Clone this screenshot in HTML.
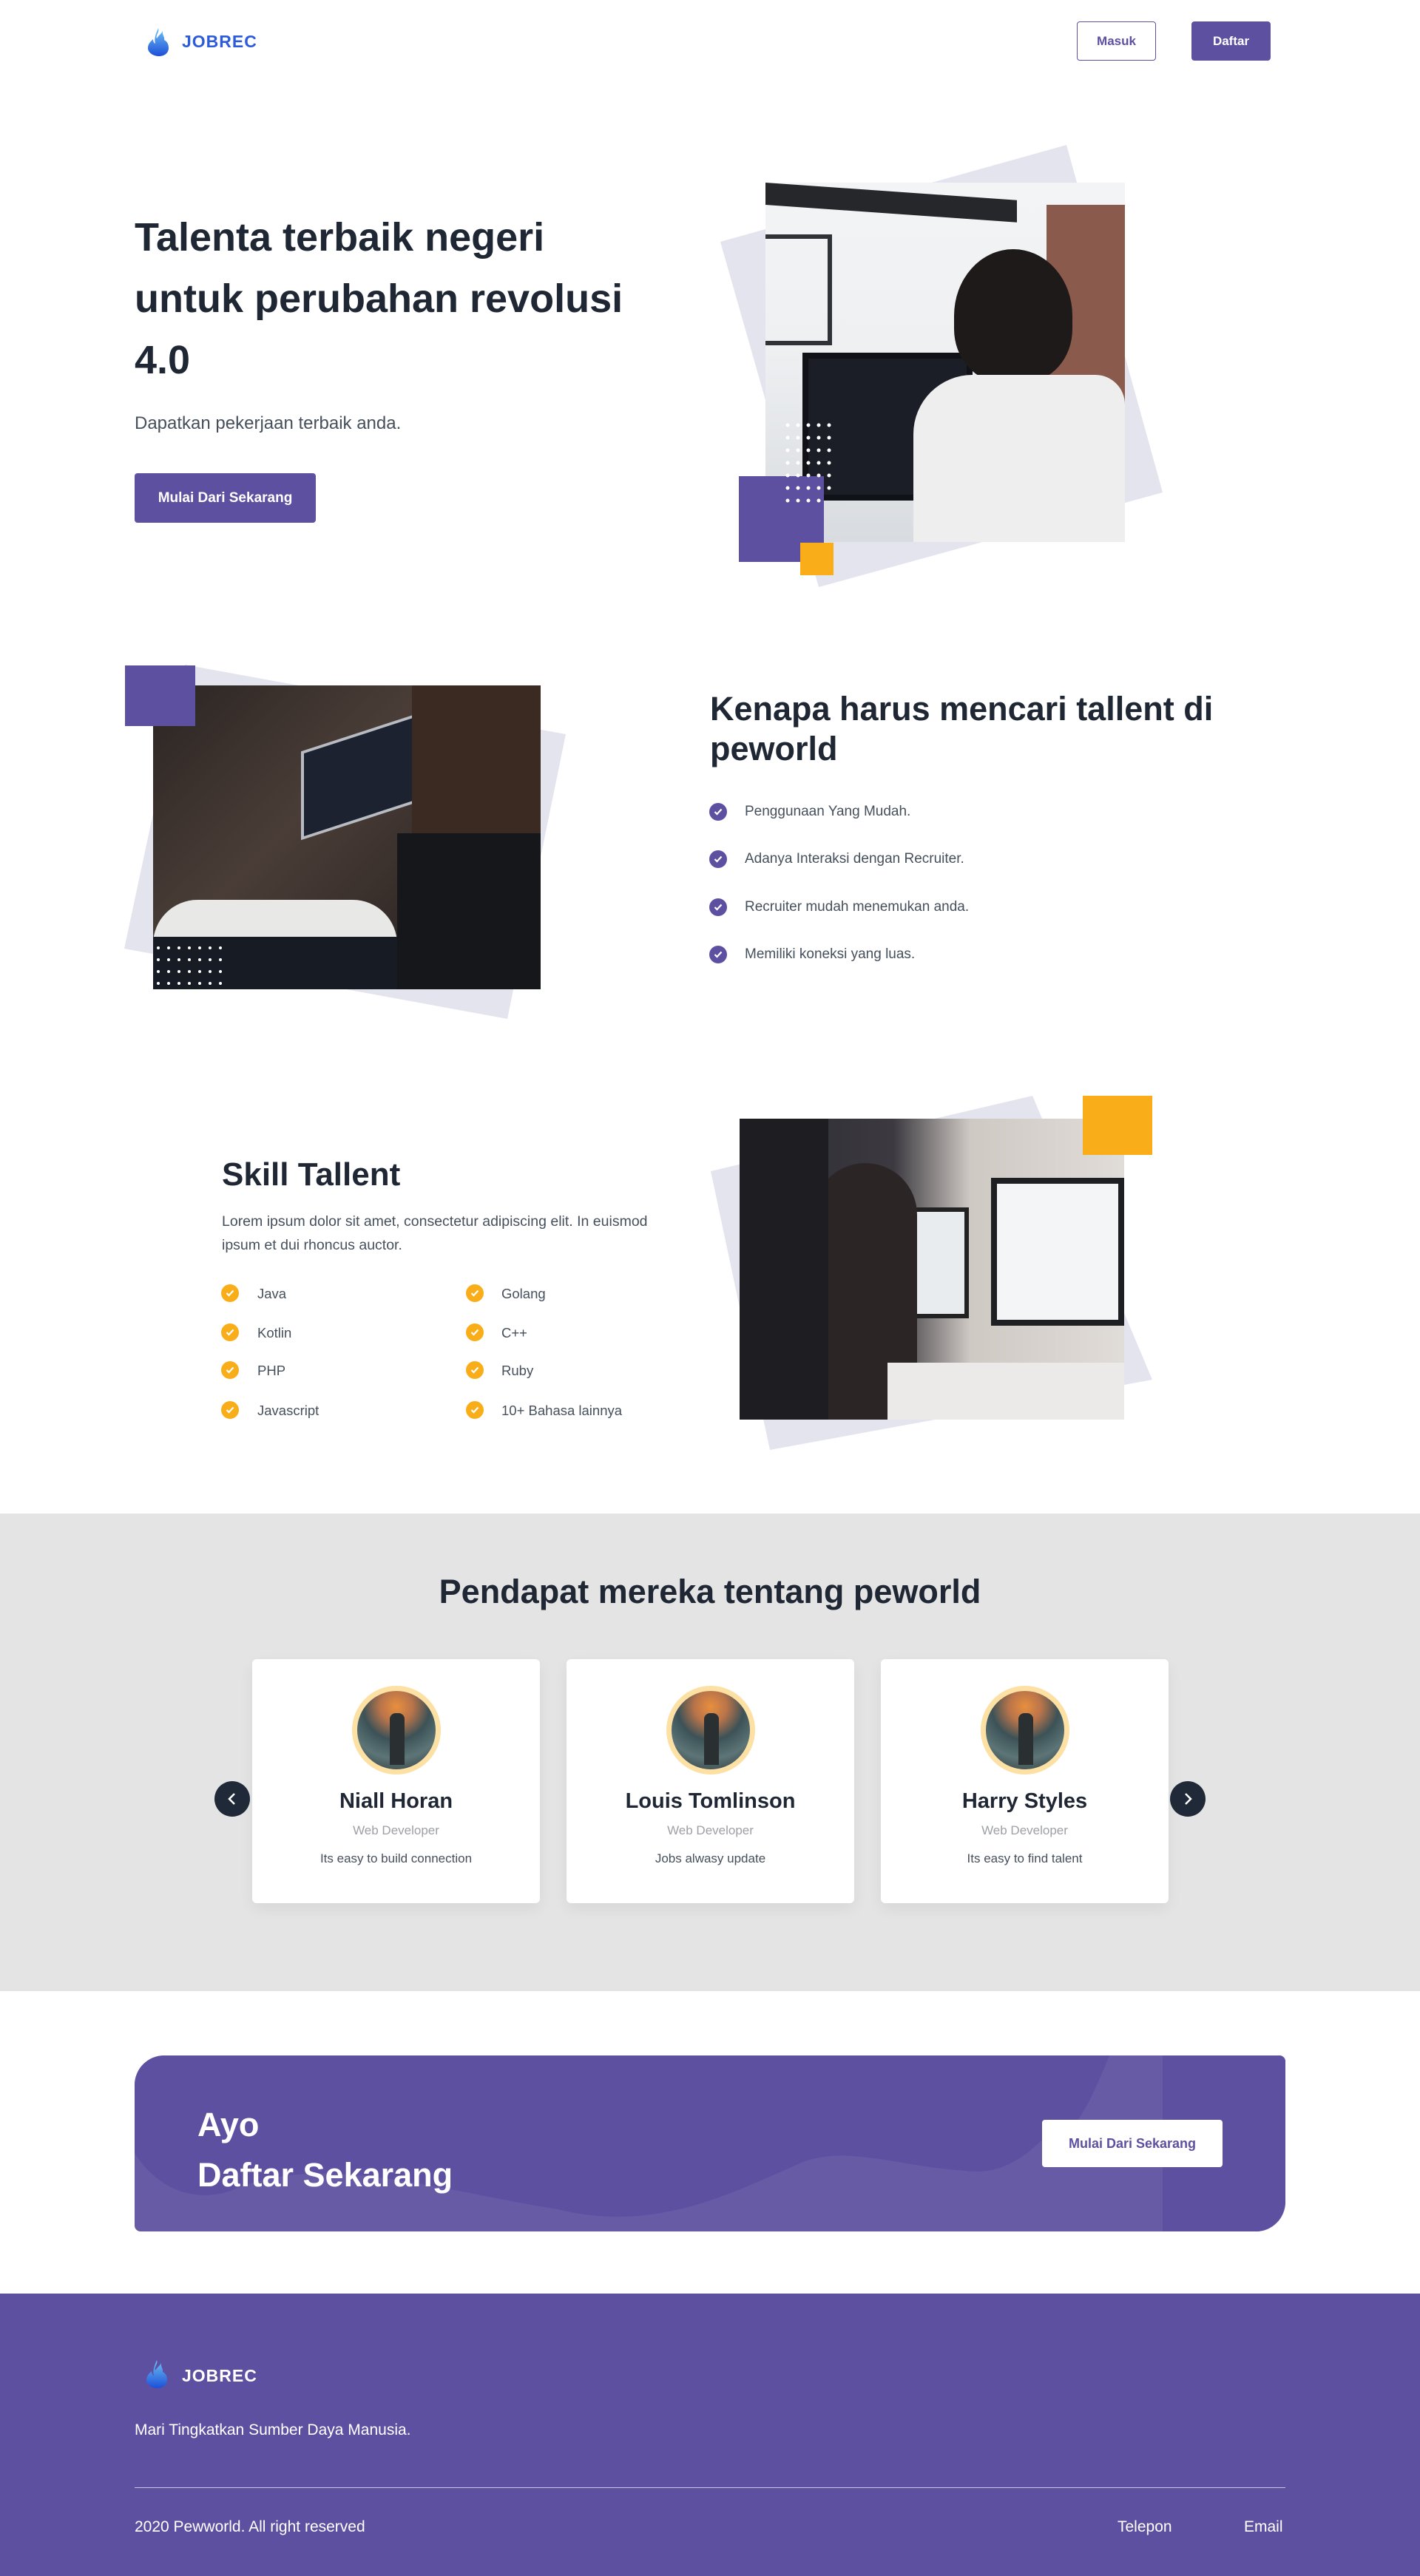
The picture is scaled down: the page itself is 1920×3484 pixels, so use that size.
<!DOCTYPE html>
<html><head><meta charset="utf-8"><style>
*{margin:0;padding:0;box-sizing:border-box}
body{width:1920px;height:3484px;position:relative;background:#fff;font-family:"Liberation Sans",Arial,sans-serif;color:#1f2734;overflow:hidden}
.a{position:absolute}
.btn{position:absolute;display:flex;align-items:center;justify-content:center;font-weight:bold;border-radius:4px}
.chk{position:absolute;width:24px;height:24px;border-radius:50%;display:flex;align-items:center;justify-content:center}
.li{position:absolute;font-size:19px;color:#46505c;white-space:nowrap}
.sk{font-size:18.5px}
.card{position:absolute;top:2244px;width:389px;height:330px;background:#fff;border-radius:6px;box-shadow:0 8px 20px rgba(0,0,0,.06);text-align:center}
.av{position:absolute;left:135px;top:36px;width:120px;height:120px;border-radius:50%;border:7px solid #fde0a4;background:radial-gradient(circle at 50% 20%,#e88f3e 0,#b9744a 22%,#3c5257 45%,#5d7577 70%,#2d3638 100%);overflow:hidden}
.av:after{content:"";position:absolute;left:44px;top:30px;width:20px;height:70px;background:#2a3032;border-radius:8px 8px 0 0}
.nm{position:absolute;left:0;right:0;top:176px;font-size:29px;font-weight:bold;color:#1f2734}
.rl{position:absolute;left:0;right:0;top:222px;font-size:17px;color:#9ea0a5}
.tx{position:absolute;left:0;right:0;top:260px;font-size:17px;color:#46505c}
.arr{position:absolute;top:2409px;width:48px;height:48px;border-radius:50%;background:#1f2937;display:flex;align-items:center;justify-content:center}
</style></head><body>

<!-- NAV -->
<svg class="a" style="left:196px;top:36px" width="36" height="42" viewBox="0 0 36 42">
<defs><linearGradient id="fl" x1="0" y1="0" x2="0" y2="1"><stop offset="0" stop-color="#6ec3f5"/><stop offset="1" stop-color="#1d4fd8"/></linearGradient></defs>
<path d="M18 2c2 6-4 9-2 14c2-4 6-6 8-10c-1 5 3 8 2 12c4 2 6 6 6 11c0 6-5 11-13 11S4 35 4 29c0-6 4-9 7-12c0 3 1 5 3 6c-2-7 1-14 4-21z" fill="url(#fl)"/>
</svg>
<div class="a" style="left:246px;top:43px;font-size:23px;font-weight:bold;color:#2c5bdc;letter-spacing:1px">JOBREC</div>
<div class="btn" style="left:1456px;top:29px;width:107px;height:53px;border:1px solid #5e50a1;color:#5e50a1;font-size:17px">Masuk</div>
<div class="btn" style="left:1611px;top:29px;width:107px;height:53px;background:#5e50a1;color:#fff;font-size:17px">Daftar</div>

<!-- HERO -->
<div class="a" style="left:182px;top:280px;font-size:54px;font-weight:bold;line-height:83px;color:#1f2734">Talenta terbaik negeri<br>untuk perubahan revolusi<br>4.0</div>
<div class="a" style="left:182px;top:559px;font-size:24px;color:#46505c">Dapatkan pekerjaan terbaik anda.</div>
<div class="btn" style="left:182px;top:640px;width:245px;height:67px;background:#5e50a1;color:#fff;font-size:19px">Mulai Dari Sekarang</div>

<svg class="a" style="left:0;top:0" width="1920" height="2050">
<polygon points="974,327 1442,196 1572,666 1107,794" fill="#e3e4ee"/>
<polygon points="250,899 765,993 686,1378 168,1283" fill="#e3e4ee"/>
<polygon points="1396,1482 1558,1866 1041,1961 961,1584" fill="#e3e4ee"/>
</svg>

<div class="a" style="left:1035px;top:247px;width:486px;height:486px;overflow:hidden;background:linear-gradient(180deg,#f2f4f6 0,#eef0f2 45%,#d8dbdf 100%)">
  <div class="a" style="left:0;top:0;width:340px;height:30px;background:#25272b;transform:skewY(4deg);transform-origin:0 0"></div>
  <div class="a" style="left:380px;top:30px;width:106px;height:300px;background:#8a5a4c"></div>
  <div class="a" style="left:0;top:70px;width:90px;height:150px;border:6px solid #2f3236;border-left:none"></div>
  <div class="a" style="left:50px;top:230px;width:230px;height:200px;background:#1b1e27;border:8px solid #101217"></div>
  <div class="a" style="left:255px;top:90px;width:160px;height:180px;background:#1e1a19;border-radius:50% 50% 40% 40%"></div>
  <div class="a" style="left:200px;top:260px;width:286px;height:226px;background:#eeeeee;border-radius:80px 40px 0 0"></div>
</div>
<div class="a" style="left:999px;top:644px;width:115px;height:116px;background:#5e50a1"></div>
<div class="a" style="left:1082px;top:734px;width:45px;height:44px;background:#f9ae19"></div>
<svg class="a" style="left:1060px;top:570px" width="120" height="150"><g fill="#fff">
<circle cx="5" cy="5" r="2.5"/><circle cx="19" cy="5" r="2.5"/><circle cx="33" cy="5" r="2.5"/><circle cx="47" cy="5" r="2.5"/><circle cx="61" cy="5" r="2.5"/>
<circle cx="5" cy="22" r="2.5"/><circle cx="19" cy="22" r="2.5"/><circle cx="33" cy="22" r="2.5"/><circle cx="47" cy="22" r="2.5"/><circle cx="61" cy="22" r="2.5"/>
<circle cx="5" cy="39" r="2.5"/><circle cx="19" cy="39" r="2.5"/><circle cx="33" cy="39" r="2.5"/><circle cx="47" cy="39" r="2.5"/><circle cx="61" cy="39" r="2.5"/>
<circle cx="5" cy="56" r="2.5"/><circle cx="19" cy="56" r="2.5"/><circle cx="33" cy="56" r="2.5"/><circle cx="47" cy="56" r="2.5"/><circle cx="61" cy="56" r="2.5"/>
<circle cx="5" cy="73" r="2.5"/><circle cx="19" cy="73" r="2.5"/><circle cx="33" cy="73" r="2.5"/><circle cx="47" cy="73" r="2.5"/><circle cx="61" cy="73" r="2.5"/>
<circle cx="5" cy="90" r="2.5"/><circle cx="19" cy="90" r="2.5"/><circle cx="33" cy="90" r="2.5"/><circle cx="47" cy="90" r="2.5"/><circle cx="61" cy="90" r="2.5"/>
<circle cx="5" cy="107" r="2.5"/><circle cx="19" cy="107" r="2.5"/><circle cx="33" cy="107" r="2.5"/><circle cx="47" cy="107" r="2.5"/>
</g></svg>

<!-- SECTION 2 -->
<div class="a" style="left:207px;top:927px;width:524px;height:411px;overflow:hidden;background:linear-gradient(135deg,#2b2523 0,#4a3d37 40%,#1e1a1a 100%)">
  <div class="a" style="left:200px;top:60px;width:180px;height:120px;background:#1c2230;border:4px solid #b8bcc2;transform:skewY(-18deg)"></div>
  <div class="a" style="left:0;top:290px;width:330px;height:121px;background:#e8e8e6;border-radius:60px 60px 0 0"></div>
  <div class="a" style="left:0;top:340px;width:330px;height:71px;background:#171b24"></div>
  <div class="a" style="left:350px;top:0;width:174px;height:411px;background:#3a2a22"></div>
  <div class="a" style="left:330px;top:200px;width:194px;height:211px;background:#15171a"></div>
</div>
<div class="a" style="left:169px;top:900px;width:95px;height:82px;background:#5e50a1"></div>
<svg class="a" style="left:210px;top:1278px" width="110" height="60"><g fill="#fff">
<circle cx="4" cy="4" r="2"/><circle cx="18" cy="4" r="2"/><circle cx="32" cy="4" r="2"/><circle cx="46" cy="4" r="2"/><circle cx="60" cy="4" r="2"/><circle cx="74" cy="4" r="2"/><circle cx="88" cy="4" r="2"/>
<circle cx="4" cy="20" r="2"/><circle cx="18" cy="20" r="2"/><circle cx="32" cy="20" r="2"/><circle cx="46" cy="20" r="2"/><circle cx="60" cy="20" r="2"/><circle cx="74" cy="20" r="2"/><circle cx="88" cy="20" r="2"/>
<circle cx="4" cy="36" r="2"/><circle cx="18" cy="36" r="2"/><circle cx="32" cy="36" r="2"/><circle cx="46" cy="36" r="2"/><circle cx="60" cy="36" r="2"/><circle cx="74" cy="36" r="2"/><circle cx="88" cy="36" r="2"/>
<circle cx="4" cy="52" r="2"/><circle cx="18" cy="52" r="2"/><circle cx="32" cy="52" r="2"/><circle cx="46" cy="52" r="2"/><circle cx="60" cy="52" r="2"/><circle cx="74" cy="52" r="2"/><circle cx="88" cy="52" r="2"/>
</g></svg>

<div class="a" style="left:960px;top:932px;font-size:45px;font-weight:bold;line-height:54px;color:#1f2734">Kenapa harus mencari tallent di<br>peworld</div>
<div class="chk" style="left:959px;top:1086px;background:#5e50a1"><svg width="12" height="10"><path d="M1.5 5l3 3 6-6.5" stroke="#fff" stroke-width="2.2" fill="none"/></svg></div>
<div class="li" style="left:1007px;top:1087px">Penggunaan Yang Mudah.</div>
<div class="chk" style="left:959px;top:1150px;background:#5e50a1"><svg width="12" height="10"><path d="M1.5 5l3 3 6-6.5" stroke="#fff" stroke-width="2.2" fill="none"/></svg></div>
<div class="li" style="left:1007px;top:1151px">Adanya Interaksi dengan Recruiter.</div>
<div class="chk" style="left:959px;top:1215px;background:#5e50a1"><svg width="12" height="10"><path d="M1.5 5l3 3 6-6.5" stroke="#fff" stroke-width="2.2" fill="none"/></svg></div>
<div class="li" style="left:1007px;top:1216px">Recruiter mudah menemukan anda.</div>
<div class="chk" style="left:959px;top:1279px;background:#5e50a1"><svg width="12" height="10"><path d="M1.5 5l3 3 6-6.5" stroke="#fff" stroke-width="2.2" fill="none"/></svg></div>
<div class="li" style="left:1007px;top:1280px">Memiliki koneksi yang luas.</div>

<!-- SECTION 3 -->
<div class="a" style="left:300px;top:1564px;font-size:44px;font-weight:bold;color:#1f2734">Skill Tallent</div>
<div class="a" style="left:300px;top:1636px;font-size:19.5px;line-height:32px;color:#46505c">Lorem ipsum dolor sit amet, consectetur adipiscing elit. In euismod<br>ipsum et dui rhoncus auctor.</div>

<div class="chk" style="left:299px;top:1737px;background:#f9ae19"><svg width="12" height="10"><path d="M1.5 5l3 3 6-6.5" stroke="#fff" stroke-width="2.2" fill="none"/></svg></div><div class="li sk" style="left:348px;top:1739px">Java</div>
<div class="chk" style="left:299px;top:1790px;background:#f9ae19"><svg width="12" height="10"><path d="M1.5 5l3 3 6-6.5" stroke="#fff" stroke-width="2.2" fill="none"/></svg></div><div class="li sk" style="left:348px;top:1792px">Kotlin</div>
<div class="chk" style="left:299px;top:1841px;background:#f9ae19"><svg width="12" height="10"><path d="M1.5 5l3 3 6-6.5" stroke="#fff" stroke-width="2.2" fill="none"/></svg></div><div class="li sk" style="left:348px;top:1843px">PHP</div>
<div class="chk" style="left:299px;top:1895px;background:#f9ae19"><svg width="12" height="10"><path d="M1.5 5l3 3 6-6.5" stroke="#fff" stroke-width="2.2" fill="none"/></svg></div><div class="li sk" style="left:348px;top:1897px">Javascript</div>
<div class="chk" style="left:630px;top:1737px;background:#f9ae19"><svg width="12" height="10"><path d="M1.5 5l3 3 6-6.5" stroke="#fff" stroke-width="2.2" fill="none"/></svg></div><div class="li sk" style="left:678px;top:1739px">Golang</div>
<div class="chk" style="left:630px;top:1790px;background:#f9ae19"><svg width="12" height="10"><path d="M1.5 5l3 3 6-6.5" stroke="#fff" stroke-width="2.2" fill="none"/></svg></div><div class="li sk" style="left:678px;top:1792px">C++</div>
<div class="chk" style="left:630px;top:1841px;background:#f9ae19"><svg width="12" height="10"><path d="M1.5 5l3 3 6-6.5" stroke="#fff" stroke-width="2.2" fill="none"/></svg></div><div class="li sk" style="left:678px;top:1843px">Ruby</div>
<div class="chk" style="left:630px;top:1895px;background:#f9ae19"><svg width="12" height="10"><path d="M1.5 5l3 3 6-6.5" stroke="#fff" stroke-width="2.2" fill="none"/></svg></div><div class="li sk" style="left:678px;top:1897px">10+ Bahasa lainnya</div>

<div class="a" style="left:1000px;top:1513px;width:520px;height:407px;overflow:hidden;background:linear-gradient(90deg,#2a2a30 0,#3c3a40 40%,#cfc9c4 60%,#e0dcd8 100%)">
  <div class="a" style="left:220px;top:120px;width:90px;height:150px;background:#e9ecef;border:6px solid #222"></div>
  <div class="a" style="left:340px;top:80px;width:180px;height:200px;background:#f3f5f7;border:8px solid #1d1f22"></div>
  <div class="a" style="left:100px;top:60px;width:140px;height:347px;background:#2b2526;border-radius:70px 70px 0 0"></div>
  <div class="a" style="left:0;top:0;width:120px;height:407px;background:#1e1d22"></div>
  <div class="a" style="left:200px;top:330px;width:320px;height:77px;background:#eceae8"></div>
</div>
<div class="a" style="left:1464px;top:1482px;width:94px;height:80px;background:#f9ae19"></div>

<!-- TESTIMONIALS -->
<div class="a" style="left:0;top:2047px;width:1920px;height:646px;background:#e4e4e4"></div>
<div class="a" style="left:0;right:0;top:2127px;text-align:center;font-size:45px;font-weight:bold;color:#1f2734">Pendapat mereka tentang peworld</div>
<div class="card" style="left:341px"><div class="av"></div><div class="nm">Niall Horan</div><div class="rl">Web Developer</div><div class="tx">Its easy to build connection</div></div>
<div class="card" style="left:766px"><div class="av"></div><div class="nm">Louis Tomlinson</div><div class="rl">Web Developer</div><div class="tx">Jobs alwasy update</div></div>
<div class="card" style="left:1191px"><div class="av"></div><div class="nm">Harry Styles</div><div class="rl">Web Developer</div><div class="tx">Its easy to find talent</div></div>
<div class="arr" style="left:290px"><svg width="14" height="18"><path d="M10 2L3 9l7 7" stroke="#fff" stroke-width="2.5" fill="none"/></svg></div>
<div class="arr" style="left:1582px"><svg width="14" height="18"><path d="M4 2l7 7-7 7" stroke="#fff" stroke-width="2.5" fill="none"/></svg></div>

<!-- CTA -->
<div class="a" style="left:182px;top:2780px;width:1556px;height:238px;border-radius:40px 8px 40px 8px;overflow:hidden;background:#675ba6">
<svg class="a" style="left:0;top:0" width="1556" height="238">
<path d="M0 0H1318C1290 70 1260 130 1226 115C1190 150 1160 160 1124 156C1030 150 960 120 899 146C800 190 700 240 572 208C400 180 250 130 130 183C80 200 30 180 0 132Z" fill="#5e50a1"/>
<rect x="1390" y="0" width="166" height="238" fill="#5e50a1"/>
</svg>
<div class="a" style="left:85px;top:60px;font-size:45px;font-weight:bold;color:#fff;line-height:68px">Ayo<br>Daftar Sekarang</div>
<div class="btn" style="left:1227px;top:87px;width:244px;height:64px;background:#fff;color:#5e50a1;font-size:18px">Mulai Dari Sekarang</div>
</div>

<!-- FOOTER -->
<div class="a" style="left:0;top:3102px;width:1920px;height:382px;background:#5e50a1"></div>
<svg class="a" style="left:194px;top:3190px" width="36" height="42" viewBox="0 0 36 42">
<path d="M18 2c2 6-4 9-2 14c2-4 6-6 8-10c-1 5 3 8 2 12c4 2 6 6 6 11c0 6-5 11-13 11S4 35 4 29c0-6 4-9 7-12c0 3 1 5 3 6c-2-7 1-14 4-21z" fill="url(#fl)"/>
</svg>
<div class="a" style="left:246px;top:3200px;font-size:23px;font-weight:bold;color:#fff;letter-spacing:1px">JOBREC</div>
<div class="a" style="left:182px;top:3275px;font-size:21px;color:#fff">Mari Tingkatkan Sumber Daya Manusia.</div>
<div class="a" style="left:182px;top:3364px;width:1556px;height:1px;background:#c9c4e0"></div>
<div class="a" style="left:182px;top:3406px;font-size:21px;color:#fff">2020 Pewworld. All right reserved</div>
<div class="a" style="left:1511px;top:3406px;font-size:21px;color:#fff">Telepon</div>
<div class="a" style="left:1682px;top:3406px;font-size:21px;color:#fff">Email</div>
</body></html>
